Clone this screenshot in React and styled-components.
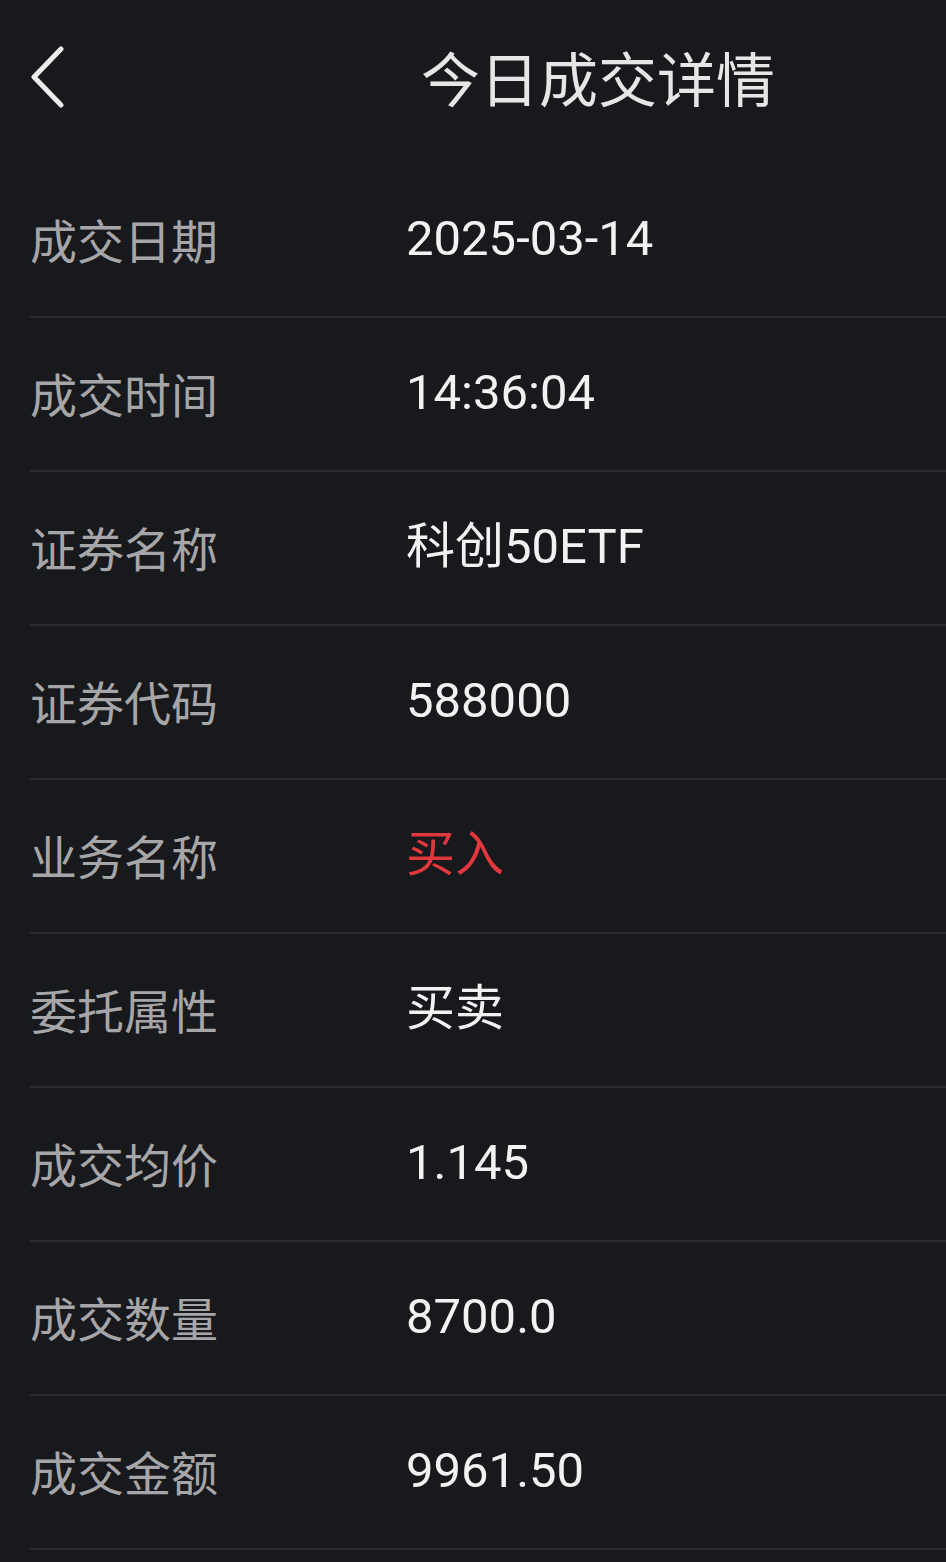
import React from 'react'
import styled, { createGlobalStyle } from 'styled-components'

const GlobalStyle = createGlobalStyle`
  html, body {
    margin: 0;
    padding: 0;
    background: #18191c;
  }
  body {
    font-family: Roboto, "Noto Sans CJK SC", sans-serif;
  }
`

const Page = styled.div`
  width: 946px;
  min-height: 1562px;
  background: #18191c;
  overflow: hidden;
`

const Header = styled.header`
  height: 152px;
  display: flex;
  align-items: center;
  position: relative;
`

const BackButton = styled.button`
  background: none;
  border: none;
  padding: 0;
  margin-left: 28px;
  margin-top: 2px;
  width: 44px;
  height: 64px;
  display: flex;
  align-items: center;
  cursor: pointer;
`

const Title = styled.h1`
  margin: 0 0 0 349px;
  font-family: "Noto Sans CJK SC", sans-serif;
  font-weight: 400;
  font-size: 59px;
  line-height: 1;
  color: #e6e6e6;
`

const List = styled.div`
  display: flex;
  flex-direction: column;
  padding-top: 12px;
`

const Row = styled.div`
  height: 152px;
  margin-left: 30px;
  border-bottom: 2px solid #2a2b2e;
  display: flex;
  align-items: center;
  padding-bottom: 4px;
  box-sizing: border-box;
  height: 154px;
`

const Label = styled.span`
  width: 376px;
  flex-shrink: 0;
  font-family: "Noto Sans CJK SC", sans-serif;
  font-size: 47px;
  color: #a6a6a8;
  line-height: 1;
`

const Value = styled.span`
  font-family: Roboto, "Noto Sans CJK SC", sans-serif;
  font-size: 49px;
  color: ${p => (p.$red ? '#e2383d' : '#f2f2f2')};
  line-height: 1;
`

const rows = [
  ['成交日期', '2025-03-14'],
  ['成交时间', '14:36:04'],
  ['证券名称', '科创50ETF'],
  ['证券代码', '588000'],
  ['业务名称', '买入', true],
  ['委托属性', '买卖'],
  ['成交均价', '1.145'],
  ['成交数量', '8700.0'],
  ['成交金额', '9961.50'],
]

const App = () => {
  return (
    <Page>
      <GlobalStyle />
      <Header>
        <BackButton aria-label="返回">
          <svg width="40" height="62" viewBox="0 0 40 62" fill="none">
            <path d="M33 3 L6 31 L33 59" stroke="#ececec" strokeWidth="5" strokeLinecap="round" strokeLinejoin="round" />
          </svg>
        </BackButton>
        <Title>今日成交详情</Title>
      </Header>
      <List>
        {rows.map(([label, value, red]) => (
          <Row key={label}>
            <Label>{label}</Label>
            <Value $red={red}>{value}</Value>
          </Row>
        ))}
      </List>
    </Page>
  )
}

export default App
